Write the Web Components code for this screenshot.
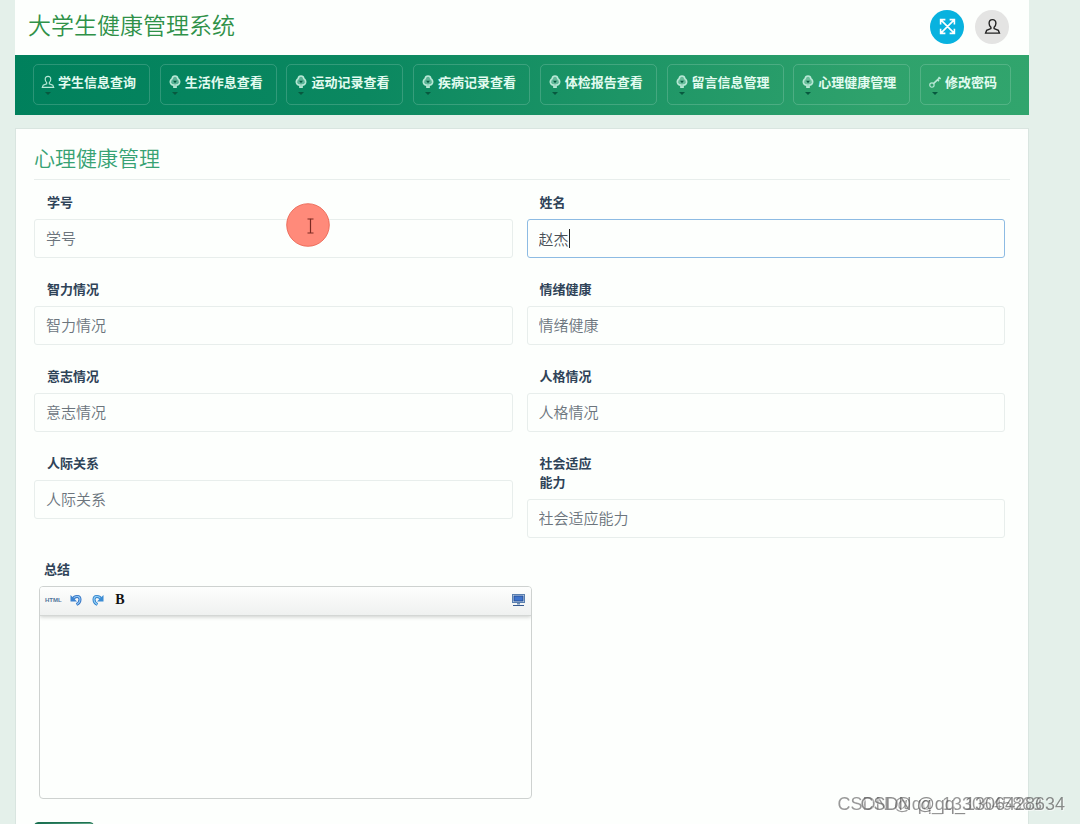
<!DOCTYPE html>
<html lang="zh-CN">
<head>
<meta charset="utf-8">
<title>大学生健康管理系统</title>
<style>
  html { background: #e4f0ea; }
  body { margin: 0; font-family: "Liberation Sans", "Noto Sans CJK SC", sans-serif; color: #2f4358; }
</style>
</head>
<body>
<health-app></health-app>
<script>
const define = (name, html, setup) => customElements.define(name, class extends HTMLElement {
  connectedCallback() {
    if (this.shadowRoot) return;
    const root = this.attachShadow({ mode: "open" });
    const t = document.createElement("template");
    t.innerHTML = typeof html === "function" ? html(this) : html;
    root.append(t.content.cloneNode(true));
    if (setup) setup(this, root);
  }
});

const glyphs = {
  user: `<path d="M8 1.500c-2 0-3.200 1.400-3.200 3.400 0 1.700.8 3 1.700 3.800v1.300L2.500 11.600 1.500 14.200h13l-1-2.600L9.500 10V8.700c.9-.8 1.700-2.100 1.700-3.800 0-2-1.200-3.400-3.200-3.400z"/>`,
  mic: `<path d="M8 1.200C6 1.200 5 2.500 4.800 4.200 3 5.500 2.300 7 2.800 9c.5 1.700 2 2.600 4 2.600V14h2.400v-2.400c2 0 3.500-.9 4-2.600.5-2-.2-3.500-2-4.800C11 2.500 10 1.200 8 1.200z" fill="currentColor" fill-opacity=".45" stroke-width="1.800"/><path d="M5.800 6.500h4.400L8 9.500z" fill="#07593f" stroke="none"/>`,
  key: `<circle cx="4.500" cy="11.500" r="2.500"/><path d="M6.500 9.500 13.500 3M10.500 5l2 2M12 2.500l2.500 2" stroke-width="1.800"/>`,
  expand: `<path d="M2 2l12 12M14 2 2 14M1.500 6V1.500H6M10 1.500h4.500V6M14.500 10v4.500H10M6 14.500H1.500V10" stroke-width="1.500"/>`
};

define("app-icon", el => `
<style>
  :host { display: inline-flex; flex: none; width: 14px; height: 14px; }
  svg { width: 100%; height: 100%; fill: none; stroke: currentColor; stroke-width: 1.300; }
</style>
<svg viewBox="0 0 16 16" aria-hidden="true">${glyphs[el.getAttribute("name")]}</svg>`);

define("round-button", el => `
<style>
  :host { display: block; }
  button { display: flex; align-items: center; justify-content: center; width: 34px; height: 34px; padding: 0; border: 0; border-radius: 50%; background: var(--fill); color: var(--ink); }
  app-icon { width: 17px; height: 17px; }
</style>
<button type="button" aria-label="${el.getAttribute("label")}"><app-icon name="${el.getAttribute("icon")}"></app-icon></button>`);

define("site-header", `
<style>
  :host { display: flex; align-items: center; justify-content: space-between; height: 55px; padding: 0 20px 0 13px; box-sizing: border-box; background: #fdfffd; }
  h1 { margin: 0 0 3px; font-size: 23px; line-height: 32px; font-weight: 350; color: #2f9148; }
  div { display: flex; gap: 11px; margin-bottom: 2px; }
  .full { --fill: #08b2df; --ink: #fff; }
  .me { --fill: #e4e4e3; --ink: #222; }
</style>
<h1>大学生健康管理系统</h1>
<div>
  <round-button class="full" icon="expand" label="全屏"></round-button>
  <round-button class="me" icon="user" label="个人中心"></round-button>
</div>`);

define("nav-item", el => `
<style>
  :host { display: block; }
  a { position: relative; display: flex; gap: 3px; height: 41px; box-sizing: border-box; padding: 8px 13px 0 7px; border: 1px solid #ffffff2b; border-radius: 5px; color: #e2fbf0; font-size: 13px; line-height: 19px; font-weight: 600; text-decoration: none; white-space: nowrap; }
  app-icon { margin-top: 2px; color: #b9e8d6; }
  a::after { content: ""; position: absolute; left: 11px; bottom: 9px; border: 3px solid transparent; border-top-color: #07593f; border-bottom: 0; }
</style>
<a href="#"><app-icon name="${el.getAttribute("icon")}"></app-icon><span><slot></slot></span></a>`);

define("main-nav", `
<style>
  :host { display: block; padding: 9px 18px 10px; background: linear-gradient(100deg, #00805c, #0b8860 35%, #2fa26c 85%, #31a56d); }
  nav { display: flex; justify-content: space-between; }
</style>
<nav>
  <nav-item icon="user">学生信息查询</nav-item>
  <nav-item icon="mic">生活作息查看</nav-item>
  <nav-item icon="mic">运动记录查看</nav-item>
  <nav-item icon="mic">疾病记录查看</nav-item>
  <nav-item icon="mic">体检报告查看</nav-item>
  <nav-item icon="mic">留言信息管理</nav-item>
  <nav-item icon="mic">心理健康管理</nav-item>
  <nav-item icon="key">修改密码</nav-item>
</nav>`);

define("form-field", el => `
<style>
  :host { display: block; }
  label { display: block; width: 56px; margin-left: 13px; font-size: 13px; line-height: 19px; font-weight: 600; }
  input { display: block; width: 100%; height: 39px; box-sizing: border-box; margin-top: 7px; padding: 0 11px; border: 1px solid #e8eeec; border-radius: 3px; outline: 0; background: #fdfffd; color: #495057; font: 350 15px "Liberation Sans", "Noto Sans CJK SC", sans-serif; }
  input::placeholder { color: #6c757d; opacity: 1; }
  .entry { position: relative; }
  :host([active]) input { border-color: #8dbbe3; }
  :host([active]) .entry::after { content: ""; position: absolute; left: 42px; top: 10px; width: 1px; height: 19px; background: #222; }
</style>
<label for="field">${el.getAttribute("label")}</label>
<div class="entry"><input id="field" type="text" placeholder="${el.getAttribute("label")}" value="${el.getAttribute("value") || ""}"></div>`);

define("rich-editor", `
<style>
  :host { display: block; }
  label { display: block; margin-left: 5px; font-size: 13px; line-height: 19px; font-weight: 600; }
  .box { margin-top: 7px; border: 1px solid #ced2d0; border-radius: 4px; background: #fdfffd; overflow: hidden; }
  .bar { position: relative; display: flex; align-items: center; height: 26px; padding: 0 5px 2px; border-bottom: 1px solid #d4d7d5; background: linear-gradient(#fdfefd, #eff1f0); box-shadow: 0 1px 4px #0003; }
  button { display: flex; align-items: center; justify-content: center; width: 22px; height: 22px; padding: 0; border: 0; background: none; color: #111; }
  .html { width: 20px; justify-content: flex-start; font: 700 6px "Liberation Sans", sans-serif; color: #50749a; }
  .bold { font: 700 14px "Liberation Serif", serif; }
  .screen { margin-left: auto; margin-right: -4px; }
  textarea { display: block; width: 100%; height: 182px; box-sizing: border-box; border: 0; outline: 0; resize: none; background: none; }
</style>
<label for="summary">总结</label>
<div class="box">
  <div class="bar">
    <button type="button" class="html">HTML</button>
    <button type="button" aria-label="撤销"><svg width="12" height="12" viewBox="0 0 12 12"><path d="M3 5C5 1.500 10 1.500 10 5.500c0 2.500-1.500 4-3.500 5" fill="none" stroke="#2f6fc0" stroke-width="3"/><path d="M3 5C5 1.500 10 1.500 10 5.500c0 2.500-1.500 4-3.500 5" fill="none" stroke="#8cc4f5" stroke-width="1.200"/><path d="M.5 1v6.500H7z" fill="#3b82d0"/></svg></button>
    <button type="button" aria-label="重做"><svg width="12" height="12" viewBox="0 0 12 12"><path d="M9 5C7 1.500 2 1.500 2 5.500c0 2.500 1.500 4 3.500 5" fill="none" stroke="#2f7fca" stroke-width="3"/><path d="M9 5C7 1.500 2 1.500 2 5.500c0 2.500 1.500 4 3.500 5" fill="none" stroke="#8fcdf6" stroke-width="1.200"/><path d="M11.500 1v6.500H5z" fill="#3b8cd4"/></svg></button>
    <button type="button" class="bold">B</button>
    <button type="button" class="screen" aria-label="全屏编辑"><svg width="13" height="12" viewBox="0 0 13 12"><rect x=".5" y=".5" width="12" height="8" fill="#dbe8f7" stroke="#5a7fae"/><rect x="2" y="2" width="9" height="5" fill="#3f74cc" stroke="#264f94"/><path d="M5 9h3v1.500H5z" fill="#6b8bb4"/><path d="M1 11.500h11" stroke="#35598f"/></svg></button>
  </div>
  <textarea id="summary"></textarea>
</div>`);

define("form-card", `
<style>
  :host { display: block; margin: 13px 0 0; padding: 14px 18px 0; border: 1px solid #d9e5e0; background: #fdfffd; }
  h2 { margin: 0; padding-bottom: 4px; border-bottom: 1px solid #e8eeec; font-size: 21px; line-height: 32px; font-weight: 350; color: #37a274; }
  .grid { display: grid; grid-template-columns: 1fr 1fr; gap: 22px 14px; margin: 13px 5px 0 0; }
  rich-editor { width: 51%; box-sizing: border-box; margin: 22px 0 23px; padding-left: 5px; }
  button { display: block; width: 60px; height: 36px; border: 1px solid #1d7351; border-radius: 4px; background: linear-gradient(90deg, #12694c, #67a98c); color: #fff; font: 500 13px "Noto Sans CJK SC", sans-serif; }
</style>
<h2>心理健康管理</h2>
<form>
  <div class="grid">
    <form-field label="学号"></form-field>
    <form-field label="姓名" value="赵杰" active></form-field>
    <form-field label="智力情况"></form-field>
    <form-field label="情绪健康"></form-field>
    <form-field label="意志情况"></form-field>
    <form-field label="人格情况"></form-field>
    <form-field label="人际关系"></form-field>
    <form-field label="社会适应能力"></form-field>
  </div>
  <rich-editor></rich-editor>
  <button type="button" aria-label="提交"></button>
</form>`);

define("pointer-spot", `
<style>
  :host { position: absolute; left: 286px; top: 203px; width: 44px; height: 44px; pointer-events: none; }
  svg { display: block; }
</style>
<svg width="44" height="44" viewBox="0 0 44 44" aria-hidden="true"><circle cx="22" cy="22" r="21.300" fill="#ff8a7a" stroke="#e8604c" stroke-width=".8"/><path d="M21.500 16h2.500l.5.500.5-.5h2.500M24.500 16.500v13M21.500 30h2.500l.5-.5.5.5h2.500" fill="none" stroke="#7b2a22" stroke-width="1.200"/></svg>`);

define("water-mark", `
<style>
  :host { position: fixed; right: 15px; bottom: 9px; display: grid; font-size: 18px; line-height: 22px; color: #666a; text-shadow: 1px 1px 0 #fff8; white-space: nowrap; pointer-events: none; }
  span { grid-area: 1 / 1; }
  .back { margin-right: 23px; }
  .front { margin-left: 23px; color: #555a; }
</style>
<span class="back">CSDN @qq_1330645863</span><span class="front">CSDN @qq_1306428634</span>`);

define("health-app", `
<style>
  :host { display: block; height: 100vh; overflow: hidden; position: relative; }
  main { margin: 0 51px 0 15px; }
</style>
<main>
  <site-header></site-header>
  <main-nav></main-nav>
  <form-card></form-card>
</main>
<pointer-spot></pointer-spot>
<water-mark></water-mark>`);
</script>
</body>
</html>
